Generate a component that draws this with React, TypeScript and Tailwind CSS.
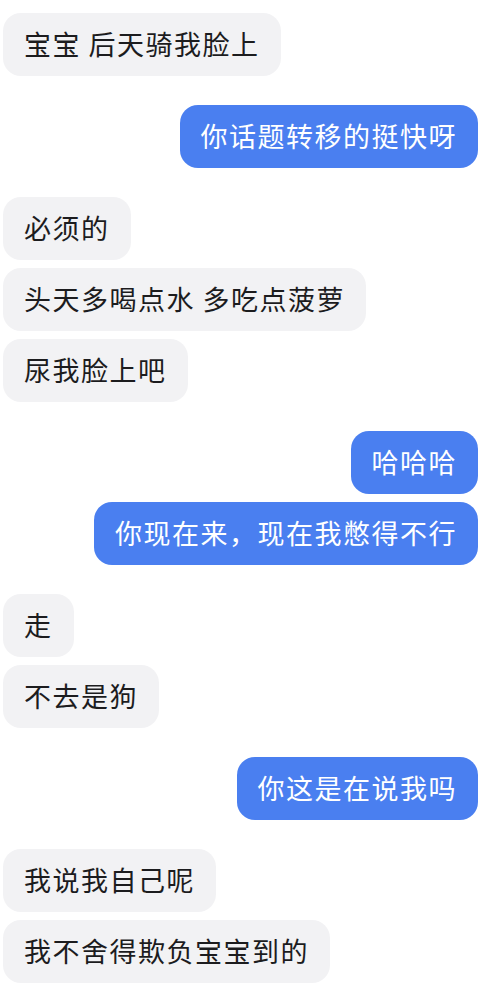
import React from 'react';

type Msg = { me: boolean; text: string; gap?: 'group' | 'tight' };

const messages: Msg[] = [
  { me: false, text: '宝宝 后天骑我脸上' },
  { me: true, text: '你话题转移的挺快呀', gap: 'group' },
  { me: false, text: '必须的', gap: 'group' },
  { me: false, text: '头天多喝点水 多吃点菠萝', gap: 'tight' },
  { me: false, text: '尿我脸上吧', gap: 'tight' },
  { me: true, text: '哈哈哈', gap: 'group' },
  { me: true, text: '你现在来，现在我憋得不行', gap: 'tight' },
  { me: false, text: '走', gap: 'group' },
  { me: false, text: '不去是狗', gap: 'tight' },
  { me: true, text: '你这是在说我吗', gap: 'group' },
  { me: false, text: '我说我自己呢', gap: 'group' },
  { me: false, text: '我不舍得欺负宝宝到的', gap: 'tight' },
];

function Bubble({ msg }: { msg: Msg }) {
  const mt = msg.gap === 'group' ? 'mt-[29px]' : msg.gap === 'tight' ? 'mt-[8px]' : 'mt-0';
  return (
    <div className={`flex ${msg.me ? 'justify-end' : 'justify-start'} ${mt}`}>
      <div
        className={`h-[63px] flex items-center px-[21px] rounded-[18px] text-[27px] tracking-[1.5px] whitespace-pre ${
          msg.me ? 'bg-[#4a7ff0] text-white' : 'bg-[#f2f2f4] text-[#1c1c1e]'
        }`}
      >
        {msg.text}
      </div>
    </div>
  );
}

export default function App() {
  return (
    <div
      className="w-[488px] h-[1000px] bg-white pt-[13px] pl-[3px] pr-[10px] overflow-hidden"
      style={{ fontFamily: '"Noto Sans CJK SC", "Noto Sans", sans-serif' }}
    >
      {messages.map((m, i) => (
        <Bubble key={i} msg={m} />
      ))}
    </div>
  );
}
